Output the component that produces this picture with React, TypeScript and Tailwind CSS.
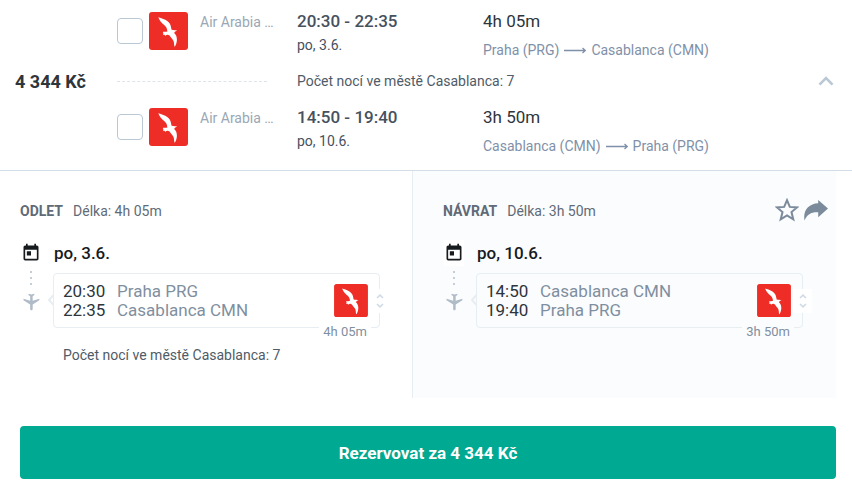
import { MdFlight, MdToday } from 'react-icons/md'
import { clsx } from 'clsx'

interface Leg {
  id:       string
  title:    string
  date:     string
  depart:   string
  arrive:   string
  from:     string
  fromCode: string
  to:       string
  toCode:   string
  duration: string
  nights?:  number
}

const PRICE = '4 344 Kč'

const LEGS: Leg[] = [
  {
    id: 'out', title: 'ODLET', date: 'po, 3.6.', depart: '20:30', arrive: '22:35',
    from: 'Praha', fromCode: 'PRG', to: 'Casablanca', toCode: 'CMN', duration: '4h 05m', nights: 7,
  },
  {
    id: 'back', title: 'NÁVRAT', date: 'po, 10.6.', depart: '14:50', arrive: '19:40',
    from: 'Casablanca', fromCode: 'CMN', to: 'Praha', toCode: 'PRG', duration: '3h 50m',
  },
]

function AirlineLogo({ className }: { className?: string }) {
  return (
    <svg viewBox="0 0 39 38" className={className} role="img" aria-label="Air Arabia">
      <rect width="39" height="38" rx="3" fill="#ee2d27" />
      <path
        fill="#fff"
        d="M9.3 5.2C11.5 6 14.6 6.6 16.8 8C19.2 9.6 21.2 11.4 21.6 13.5L22.6 17.8C24.4 18.6 26.6 17.8 28.2 18.8C26.8 19.2 25.6 19.6 25.2 21C27.2 22.8 28 25 27.9 28C27.7 30.6 27 33 25.8 34.8C25 34.2 25.2 31.8 24.8 29.8C24.2 27.4 22.2 26.4 20.8 23.8C19 22.2 17.4 22.6 16.2 24L15.6 22.8L14 23C14.6 21.8 14.4 21 13.8 20C15.4 19.6 17 20.2 18.4 19.4C18 17.8 18 16.4 17 15C15.4 13 13.2 12 11.6 9.6C10.6 8.2 10 6.6 9.3 5.2Z"
      />
    </svg>
  )
}

function LongArrow() {
  return (
    <svg viewBox="0 0 22 8" className="mx-[5px] h-2 w-[22px] shrink-0" fill="none" stroke="currentColor" aria-hidden="true">
      <path d="M0 4.5H21M18.5 2L21.2 4.5L18.5 7" strokeWidth="1.3" />
    </svg>
  )
}

function Star() {
  return (
    <svg viewBox="0 0 24 24" className="size-6" fill="none" stroke="currentColor" strokeWidth="2" aria-hidden="true">
      <path d="M12 2.2L14.8 8.9L22 9.4L16.5 14L18.3 21.4L12 17.5L5.7 21.4L7.5 14L2 9.4L9.2 8.9Z" />
    </svg>
  )
}

function ShareArrow() {
  return (
    <svg viewBox="0 0 24 21" className="h-[21px] w-6" fill="currentColor" aria-hidden="true">
      <path d="M14.2 0L24 8.5L14.2 17.3V12.2C7.5 11.8 3.2 14 .5 20.5C-1.2 10.5 4.5 3.6 14.2 3.2Z" />
    </svg>
  )
}

function SummaryLeg({ leg }: { leg: Leg }) {
  return (
    <div className="flex h-12 items-start">
      <input
        type="checkbox"
        aria-label={`${leg.from} – ${leg.to}`}
        className="mt-[7px] size-[26px] shrink-0 appearance-none rounded border border-[#bac7d5] bg-white"
      />
      <AirlineLogo className="ml-1.5 mt-px h-[38px] w-[39px] shrink-0" />
      <span className="ml-3 w-[97px] shrink-0 text-sm leading-[22px] text-[#9aa7b4]">Air Arabia …</span>
      <div className="w-[186px] shrink-0">
        <p className="text-[17px] font-medium leading-5 text-[#46515e]">{leg.depart} - {leg.arrive}</p>
        <p className="mt-1 text-sm leading-5 text-[#46515e]">{leg.date}</p>
      </div>
      <div>
        <p className="text-[17px] leading-5 text-[#2e353b]">{leg.duration}</p>
        <p className="mt-2 flex items-center whitespace-nowrap text-sm leading-[22px] text-[#7f91a8]">
          {leg.from} ({leg.fromCode})
          <LongArrow />
          {leg.to} ({leg.toCode})
        </p>
      </div>
    </div>
  )
}

function LegDetail({ leg, tinted }: { leg: Leg; tinted: boolean }) {
  return (
    <section
      className={clsx(
        'min-h-[227px] pt-[29px]',
        tinted ? 'border-l border-[#e8edf2] bg-[#fbfcfe] pl-[30px] pr-2' : 'pl-5 pr-8',
      )}
    >
      <div className="flex h-[22px] items-center">
        <h2 className="text-sm font-bold text-[#5f6b77]">{leg.title}</h2>
        <span className="ml-2.5 text-sm text-[#5f6b77]">Délka: {leg.duration}</span>
        {tinted && (
          <div className="ml-auto flex items-center gap-[5px] pb-0.5 text-[#7b8b9b]">
            <button type="button" aria-label="Uložit">
              <Star />
            </button>
            <button type="button" aria-label="Sdílet">
              <ShareArrow />
            </button>
          </div>
        )}
      </div>

      <div className={clsx('mt-[18px] flex', tinted && 'pr-[25px]')}>
        <div className="ml-px flex w-5 shrink-0 flex-col items-center">
          <span className="flex h-[26px] items-center bg-white">
            <MdToday className="size-5 text-[#171b1e]" />
          </span>
          <span className="flex h-[26px] flex-col items-center gap-1 pt-[5px] text-[#c5cdd8]">
            <i className="size-0.5 bg-current" />
            <i className="size-0.5 bg-current" />
            <i className="size-0.5 bg-current" />
          </span>
          <MdFlight className="size-5 rotate-180 text-[#b0bbc8]" />
        </div>

        <div className="ml-3 min-w-0 flex-1">
          <h3 className="h-[33px] pl-px text-[17px] font-medium leading-[26px] text-[#171b1e]">{leg.date}</h3>
          <div className="relative flex rounded border border-[#e8edf2] px-[9px] pb-[7px] pt-2">
            <svg viewBox="0 0 6 12" className="absolute -left-1.5 top-5 h-3 w-1.5" fill="none" aria-hidden="true">
              <path d="M6 .5L1 6L6 11.5" stroke="#e8edf2" strokeWidth="2" />
            </svg>
            <div className="w-[54px] shrink-0 text-[17px] leading-[19px] text-[#2e353b]">
              <p>{leg.depart}</p>
              <p>{leg.arrive}</p>
            </div>
            <div className="text-[17px] leading-[19px] text-[#7f8fa0]">
              <p>{leg.from} {leg.fromCode}</p>
              <p>{leg.to} {leg.toCode}</p>
            </div>
            <AirlineLogo className="ml-auto mr-0.5 mt-0.5 h-[33px] w-[34px]" />
            <button
              type="button"
              aria-label="Podrobnosti letu"
              className="absolute -right-2.5 top-[15px] flex h-6 w-[19px] items-center justify-center bg-white"
            >
              <svg viewBox="0 0 8 14" className="h-3.5 w-2" fill="none" stroke="#d0dae5" strokeWidth="1.6">
                <path d="M1 4L4 1.2L7 4M1 10L4 12.8L7 10" />
              </svg>
            </button>
            <span
              className={clsx(
                'absolute -bottom-3.5 right-2 px-1 text-[13px] leading-[18px] text-[#7f8fa0]',
                tinted ? 'bg-[#fbfcfe]' : 'bg-white',
              )}
            >
              {leg.duration}
            </span>
          </div>
          {leg.nights && (
            <p className="mt-[17px] pl-2.5 text-sm text-[#4f5b67]">Počet nocí ve městě {leg.to}: {leg.nights}</p>
          )}
        </div>
      </div>
    </section>
  )
}

export default function App() {
  const [out, back] = LEGS
  return (
    <main className="bg-white font-['Roboto',sans-serif]">
      <header className="flex items-center border-b border-[#d3dde8] pb-[15px] pt-[11px]">
        <strong className="w-[117px] shrink-0 pb-0.5 pl-[15px] text-lg font-bold leading-6 text-[#2e353b]">{PRICE}</strong>
        <div className="min-w-0 flex-1">
          <SummaryLeg leg={out} />
          <div className="flex h-12 items-center pb-1">
            <span className="mr-[30px] w-[150px] shrink-0 border-t border-dashed border-[#dfe4ea]" />
            <p className="text-sm text-[#4f5b67]">Počet nocí ve městě {out.to}: {out.nights}</p>
          </div>
          <SummaryLeg leg={back} />
        </div>
        <button type="button" aria-label="Sbalit" className="flex w-[52px] shrink-0 justify-center pb-1">
          <svg viewBox="0 0 16 10" className="h-2.5 w-4" fill="none" stroke="#bac7d5" strokeWidth="2.6">
            <path d="M1.5 8.6L8 2L14.5 8.6" />
          </svg>
        </button>
      </header>

      <div className="grid grid-cols-[412fr_424fr] pr-4">
        <LegDetail leg={out} tinted={false} />
        <LegDetail leg={back} tinted />
      </div>

      <div className="pb-3.5 pl-5 pr-4 pt-7">
        <button type="button" className="h-[53px] w-full rounded bg-[#00a991] pt-0.5 text-[17px] font-bold text-white">
          Rezervovat za {PRICE}
        </button>
      </div>
    </main>
  )
}
